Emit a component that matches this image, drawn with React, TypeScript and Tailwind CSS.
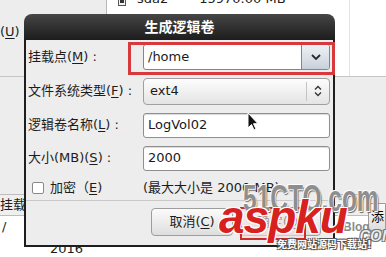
import type { ReactNode } from 'react';

const font = 'font-["DejaVu_Sans","Noto_Sans_CJK_SC",sans-serif]';

function Ul({ children }: { children: ReactNode }) {
  return <span className="underline underline-offset-[2px] decoration-1">{children}</span>;
}

function Label({ children }: { children: ReactNode }) {
  return <div className="w-[117px] pl-[2px] text-[13px] text-[#1c1c1c] whitespace-nowrap">{children}</div>;
}

function Entry({ value }: { value: string }) {
  return (
    <div className="h-[25px] w-[187px] flex items-center px-[4px] bg-white border border-[#8f8f8f] rounded-[3px] shadow-[inset_0_1px_1px_rgba(0,0,0,0.15)] text-[13px] text-[#1a1a1a]">
      {value}
    </div>
  );
}

function Button({ children }: { children: ReactNode }) {
  return (
    <div className="h-[28px] w-[82px] flex items-center justify-center rounded-[4px] border border-[#9d9d9d] bg-linear-to-b from-[#fbfbfb] to-[#dedede] text-[13px] text-[#1c1c1c]">
      {children}
    </div>
  );
}

export default function App() {
  return (
    <div className={`relative w-[386px] h-[257px] overflow-hidden bg-[#ededed] ${font}`}>
      {/* background window */}
      <div className="flex flex-col h-full">
        <div className="flex h-[78px]">
          <div className="w-[107px] border-r border-[#b8b8b8] pt-[24px] text-[13px] leading-[16px] text-[#1c1c1c]">
            (<Ul>U</Ul>)
          </div>
          <div className="flex-1 bg-white flex">
            <div className="w-[243px] border-r border-[#e4e4e4]">
              <div className="-mt-[9px] h-[16px] flex items-center text-[13px] leading-[16px] text-[#1c1c1c]">
                <div className="ml-[11px] w-[8px] h-[13px] border border-[#555] bg-[#f4f4f4] flex items-end justify-center pb-[2px]">
                  <div className="w-[4px] h-[3px] bg-[#333]" />
                </div>
                <span className="ml-[11px]">sda2</span>
                <span className="ml-[31px]">15970.00 MB</span>
              </div>
            </div>
          </div>
        </div>
        <div className="h-[121px] border-t border-[#c6c6c6]" />
        <div className="flex flex-1">
          <div className="flex-1 flex flex-col">
            <div className="h-[22px] border-y border-[#bdbdbd] bg-[#efefef] flex items-center text-[13px] text-[#1c1c1c]">
              挂载
            </div>
            <div className="flex-1 bg-white text-[13px] leading-[16px] text-[#1c1c1c]">
              <div className="pt-[3px] pl-[2px]">/</div>
              <div className="pt-[6px] pl-[50px]">2016</div>
            </div>
          </div>
          <div className="w-[18px] flex flex-col">
            <div className="mt-[9px] h-[28px] border border-[#9d9d9d] rounded-l-[4px] bg-linear-to-b from-[#fbfbfb] to-[#dedede] text-[13px] flex items-center pl-[2px]">
              添
            </div>
            <div className="flex-1 bg-white mt-[8px]" />
          </div>
        </div>
      </div>

      {/* dialog window */}
      <div className="absolute left-[24px] top-[14px] w-[311px] h-[233px] flex flex-col">
        <div className="h-[26px] rounded-t-[8px] bg-linear-to-b from-[#464646] to-[#1d1d1d] flex items-center justify-center text-[14px] font-bold text-white">
          生成逻辑卷
        </div>
        <div className="flex-1 bg-[#ededed] border-2 border-t-0 border-[#1e1e1e] flex flex-col">
          <div className="h-[33px] flex items-center">
            <Label>
              挂载点(<Ul>M</Ul>) :
            </Label>
            <div className="h-[26px] w-[187px] flex bg-white border border-[#7f868f] rounded-[3px] overflow-hidden text-[13px] text-[#1a1a1a]">
              <div className="flex-1 flex items-center px-[4px]">/home</div>
              <div className="w-[28px] border-l border-[#7f868f] bg-linear-to-b from-[#eef2f6] to-[#c8d1db] flex items-center justify-center">
                <svg width="10" height="6" viewBox="0 0 10 6" fill="none">
                  <path d="M1 1l4 4 4-4" stroke="#2a2a2a" strokeWidth="1.8" />
                </svg>
              </div>
            </div>
          </div>
          <div className="h-[36px] flex items-center">
            <Label>
              文件系统类型(<Ul>F</Ul>) :
            </Label>
            <div className="h-[27px] w-[187px] flex border border-[#a0a0a0] rounded-[4px] bg-linear-to-b from-[#fdfdfd] to-[#e4e4e4] text-[13px] text-[#1a1a1a]">
              <div className="flex-1 flex items-center pl-[6px]">ext4</div>
              <div className="w-[23px] flex items-center">
                <div className="h-[19px] border-l border-[#c4c4c4]" />
                <div className="flex-1 flex justify-center">
                  <svg width="8" height="12" viewBox="0 0 8 12" fill="none">
                    <path d="M1 4.5l3-3 3 3M1 7.5l3 3 3-3" stroke="#333" strokeWidth="1.3" />
                  </svg>
                </div>
              </div>
            </div>
          </div>
          <div className="h-[32px] flex items-center">
            <Label>
              逻辑卷名称(<Ul>L</Ul>) :
            </Label>
            <Entry value="LogVol02" />
          </div>
          <div className="h-[34px] flex items-center">
            <Label>
              大小(MB)(<Ul>S</Ul>) :
            </Label>
            <Entry value="2000" />
          </div>
          <div className="h-[25px] flex items-center text-[13px] text-[#1c1c1c]">
            <div className="w-[117px] flex items-center pl-[6px]">
              <div className="w-[12px] h-[12px] bg-white border border-[#8a8a8a] rounded-[2px]" />
              <span className="ml-[6px]">
                加密（<Ul>E</Ul>)
              </span>
            </div>
            <span>(最大大小是 2000 MB)</span>
          </div>
          <div className="flex-1 border-t border-[#c9c9c9] flex justify-end items-start pt-[7px] pr-[12px] gap-[6px]">
            <Button>
              取消(<Ul>C</Ul>)
            </Button>
            <Button>
              确定(<Ul>O</Ul>)
            </Button>
          </div>
        </div>
      </div>

      {/* highlight box */}
      <div className="absolute left-[128px] top-[42px] w-[207px] h-[33px] border-[3px] border-[#d8393c]" />

      {/* mouse pointer */}
      <svg className="absolute left-[247px] top-[112px]" width="12" height="19" viewBox="0 0 12 19">
        <path d="M1 1v15l3.5-3.5 2.5 5.5 2-1-2.5-5.3H11z" fill="#111" stroke="#fff" strokeWidth="1" />
      </svg>

      {/* watermark */}
      <div className="absolute left-[240px] top-[207px] w-[66px] h-[33px] border-2 border-[#cf2a2a] bg-[#f3dede]/60" />
      <div className="absolute left-[243px] top-[181px] origin-left scale-x-[0.68] text-[36px] font-bold leading-none text-[#8e8e8e] font-['Liberation_Sans',sans-serif] [text-shadow:1px_1px_0_#fff,-1px_-1px_0_#fff,2px_2px_1px_#666]">
        51CTO.com
      </div>
      <div className="absolute left-[343px] top-[218px] text-[12px] font-bold text-[#8a8a8a] font-['Liberation_Sans',sans-serif]">
        Blog
      </div>
      <div className="absolute left-[219px] top-[194px] text-[46px] font-bold italic leading-none text-[#d8201f] tracking-[-1px] font-['Liberation_Sans',sans-serif] [text-shadow:1px_1px_0_#fff,-1px_-1px_0_#fff,1px_-1px_0_#fff,-1px_1px_0_#fff]">
        aspku
      </div>
      <div className="absolute left-[354px] top-[223px] text-[21px] italic leading-none text-[#eeeeee] font-['Liberation_Sans',sans-serif] [text-shadow:1px_1px_0_#777,-1px_-1px_0_#777,1px_-1px_0_#777,-1px_1px_0_#777]">
        .com
      </div>
      <div className="absolute left-[277px] top-[240px] text-[10px] leading-none font-bold text-white [text-shadow:1px_1px_0_#555,-1px_-1px_0_#555,1px_-1px_0_#555,-1px_1px_0_#555]">
        免费网站源码下载站!
      </div>
    </div>
  );
}
